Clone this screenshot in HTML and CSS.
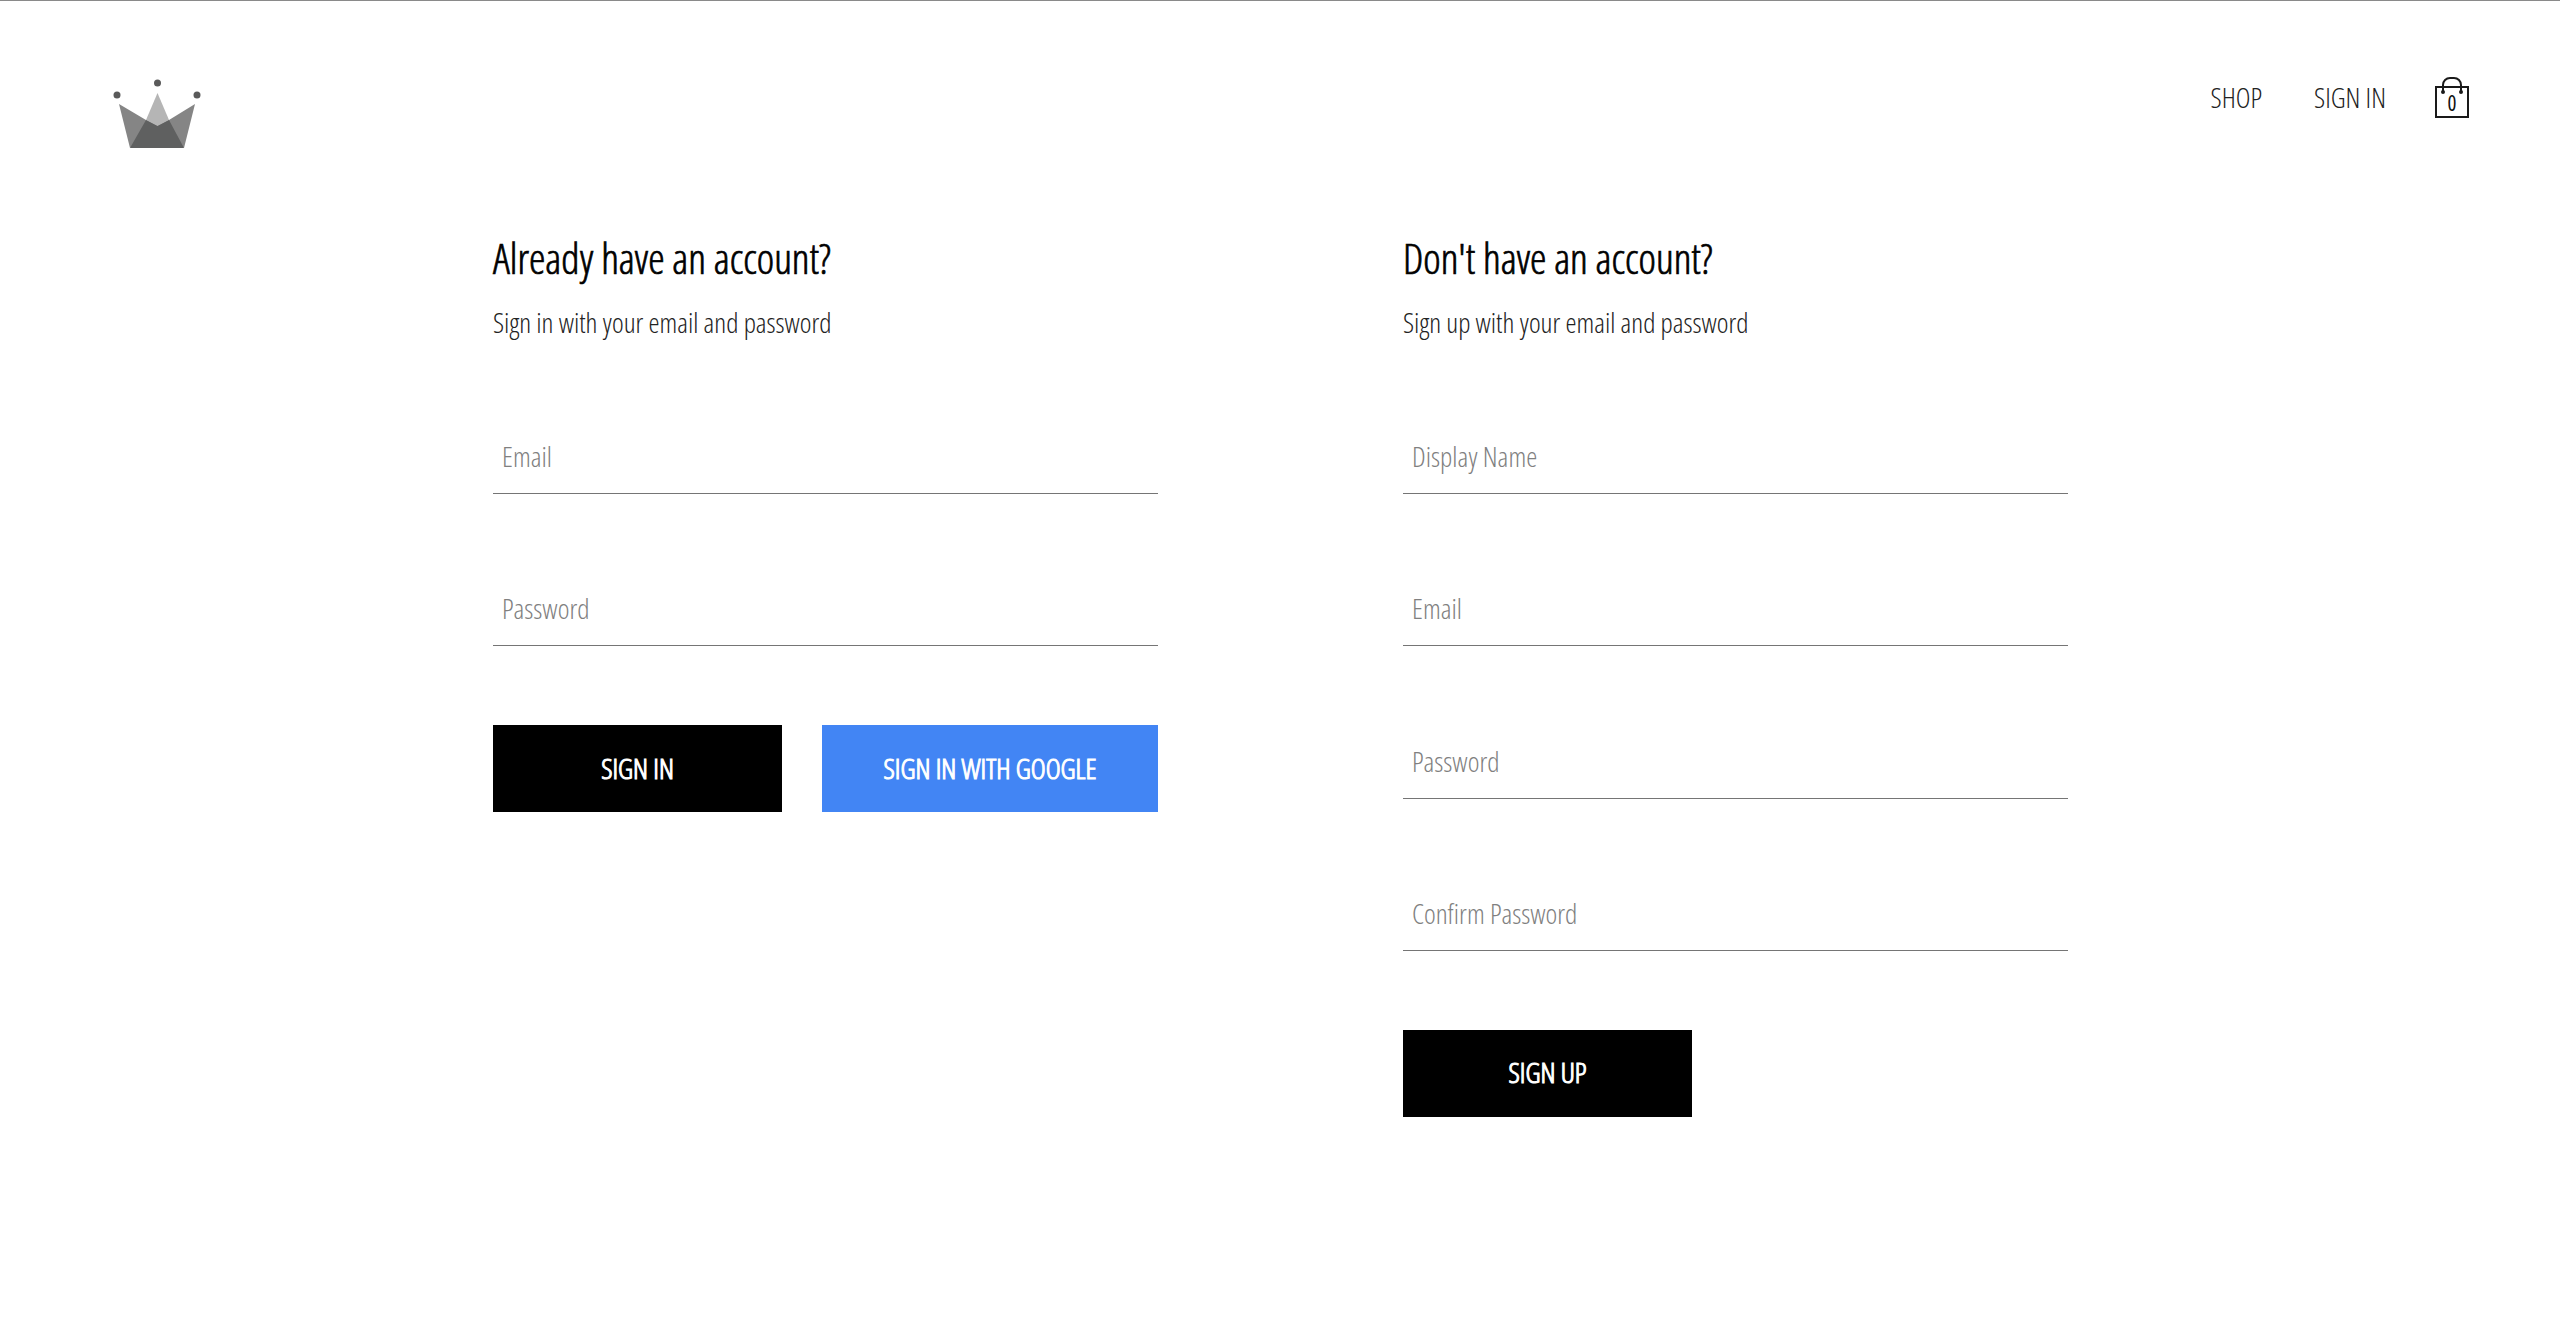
FILE: index.html
```html
<!DOCTYPE html>
<html lang="en">
<head>
<meta charset="utf-8">
<title>Sign in</title>
<link rel="stylesheet" href="styles.css">
</head>
<body>
<header class="header">
  <a class="logo" href="#" aria-label="Home">
    <svg width="90" height="72" viewBox="112 79 90 72">
      <circle cx="117" cy="95" r="3.5" fill="#5a5a5a"/><circle cx="157.5" cy="83" r="3.5" fill="#5a5a5a"/><circle cx="197" cy="95" r="3.5" fill="#5a5a5a"/>
      <path d="M157.5 93 L169 120 L157.5 126 L146 120 Z" fill="#b5b5b5"/>
      <path d="M119 104 L146 120 L157.5 126 L130 148 Z" fill="#858585"/>
      <path d="M195 104 L169 120 L157.5 126 L184 148 Z" fill="#858585"/>
      <path d="M146 120 L157.5 126 L169 120 L184 148 H130 Z" fill="#5f6060"/>
    </svg>
  </a>
  <nav class="nav">
    <a class="nav-link" href="#">SHOP</a>
    <a class="nav-link" href="#">SIGN IN</a>
    <span class="cart">
      <svg width="34" height="42" viewBox="0 0 34 42" fill="none" stroke="#1a1a1a" stroke-width="2"><rect x="1" y="11" width="32" height="30"/><path d="M8 16 V9 a7 7 0 0 1 7-7 h4 a7 7 0 0 1 7 7 V16"/><circle cx="8" cy="16" r="1" fill="#1a1a1a"/><circle cx="26" cy="16" r="1" fill="#1a1a1a"/></svg>
      <span class="cart-count">0</span>
    </span>
  </nav>
</header>
<main class="auth">
  <section class="panel">
    <h2 class="title">Already have an account?</h2>
    <p class="sub">Sign in with your email and password</p>
    <form class="form">
      <div class="fields">
        <input class="input" placeholder="Email">
        <input class="input" placeholder="Password">
      </div>
      <div class="actions">
        <button class="btn" type="button">SIGN IN</button>
        <button class="btn btn-google" type="button">SIGN IN WITH GOOGLE</button>
      </div>
    </form>
  </section>
  <section class="panel">
    <h2 class="title">Don't have an account?</h2>
    <p class="sub">Sign up with your email and password</p>
    <form class="form">
      <div class="fields">
        <input class="input" placeholder="Display Name">
        <input class="input" placeholder="Email">
        <input class="input" placeholder="Password">
        <input class="input" placeholder="Confirm Password">
      </div>
      <div class="actions">
        <button class="btn" type="button">SIGN UP</button>
      </div>
    </form>
  </section>
</main>
</body>
</html>
```
FILE: styles.css
```css
* { box-sizing: border-box; }
html, body { margin: 0; height: 100%; }
body {
  background: #fff;
  color: #000;
  font-family: "Open Sans", sans-serif;
  font-stretch: 75%;
  font-weight: 300;
  border-top: 1px solid #8a8a8a;
}
.header { display: flex; justify-content: space-between; padding: 76px 91px 0 112px; height: 198px; }
.logo { display: block; height: 72px; margin-top: 2px; }
.nav { display: flex; align-items: flex-start; gap: 50px; }
.nav-link { color: #222; text-decoration: none; font-size: 28px; line-height: 40px; height: 40px; }
.nav-link:first-child { margin-right: 2px; }
.cart { position: relative; width: 34px; height: 42px; margin: -1px 0 0 -1px; }
.cart svg { display: block; }
.cart-count { position: absolute; left: 0; right: 0; top: 12px; text-align: center; font-size: 21px; line-height: 30px; font-weight: 400; color: #111; }
.auth { display: flex; padding-left: 493px; gap: 245px; margin-top: 31px; }
.panel { width: 665px; }
.title { margin: 0; font-size: 41.5px; line-height: 57px; font-weight: 300; -webkit-text-stroke: 0.7px #000; }
.sub { margin: 17px 0 0; font-size: 27.9px; line-height: 36px; color: #222; }
.form { display: block; margin-top: 80px; }
.fields { display: grid; gap: 78.33px; }
.input { display: block; width: 100%; height: 74px; border: 0; border-bottom: 1px solid #757575; padding: 0 9px 1px; font: inherit; font-size: 28px; background: none; outline: 0; }
.input::placeholder { color: #808080; opacity: 1; }
.actions { display: flex; justify-content: space-between; margin-top: 79px; }
.btn { width: 289px; height: 87px; border: 0; padding: 0 0 2px; background: #000; color: #fff; font-family: inherit; font-stretch: 75%; font-size: 28.3px; font-weight: 300; -webkit-text-stroke: 1.1px #fff; }
.btn-google { width: 336px; background: #4285f4; }
```
